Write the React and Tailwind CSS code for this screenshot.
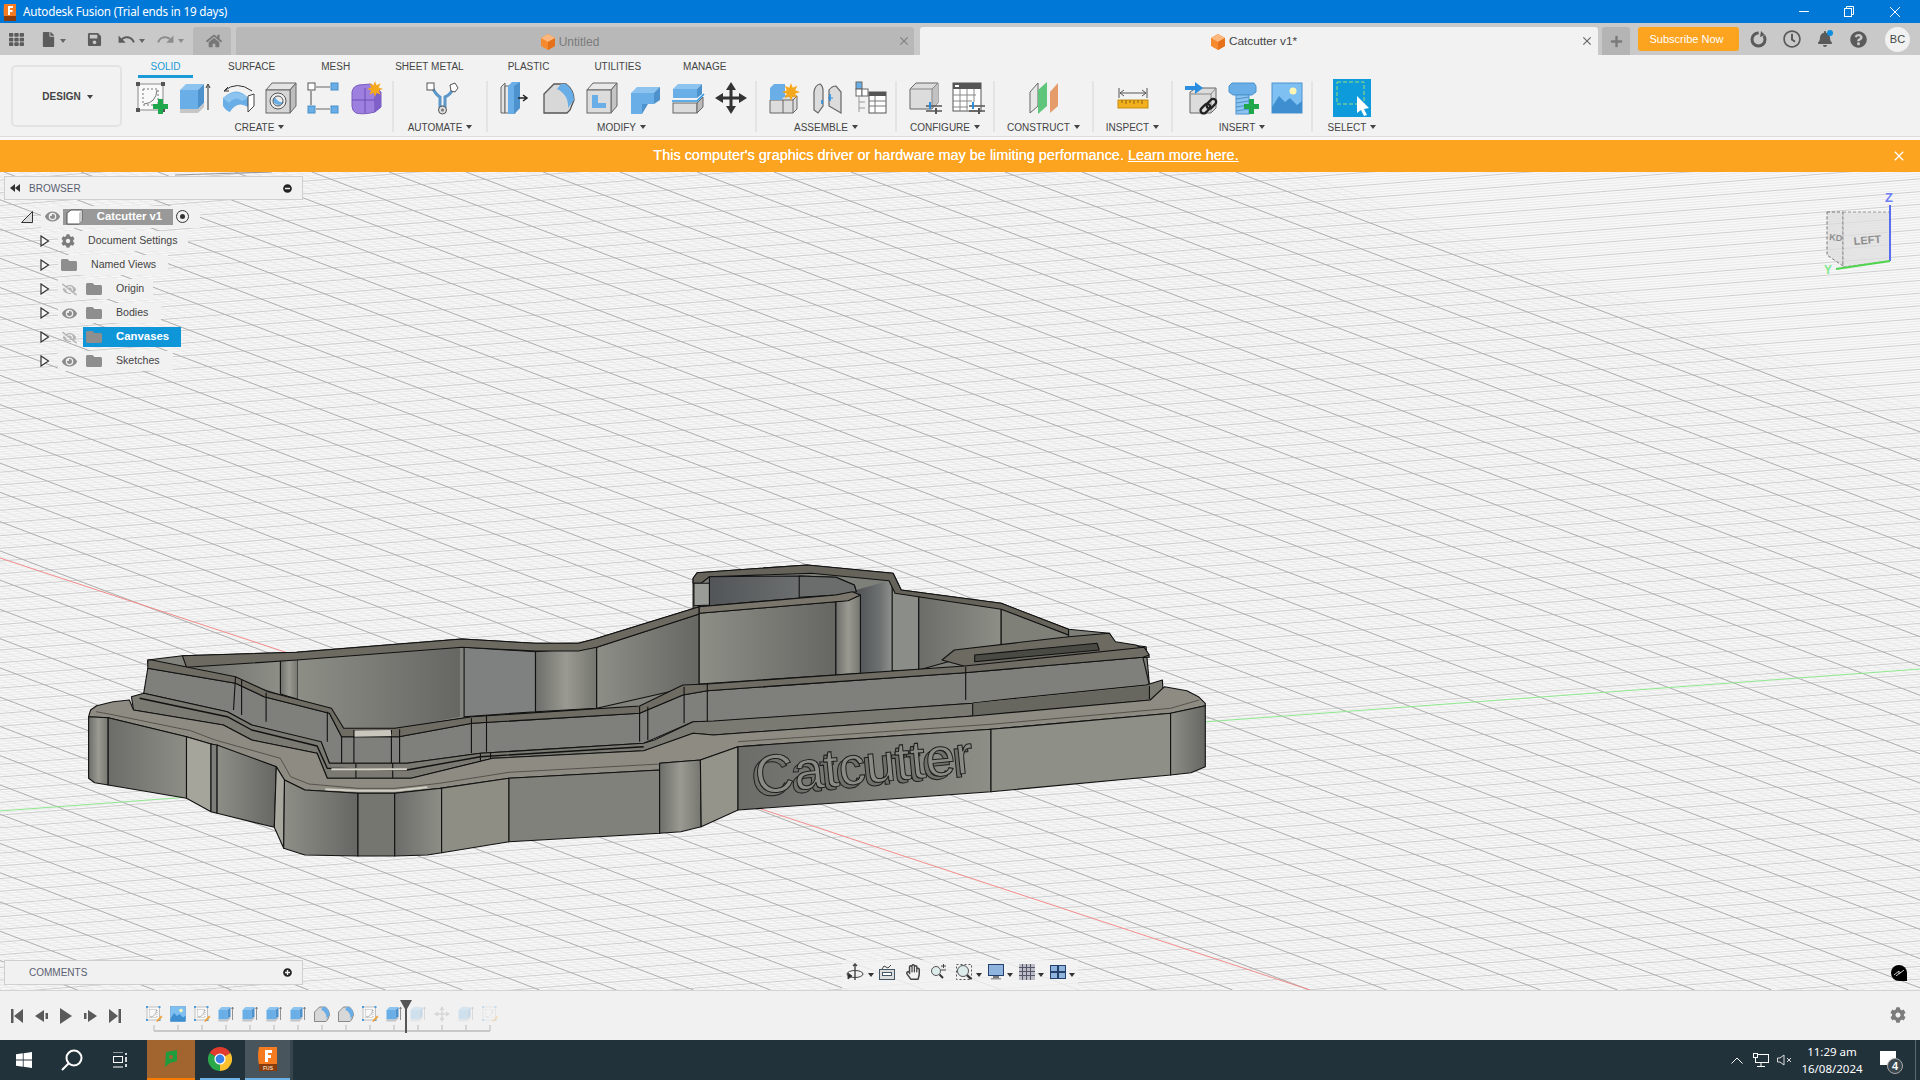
import { useMemo } from 'react'
import { FaCog, FaEye, FaEyeSlash, FaFolder, FaFile, FaSave, FaHome, FaTh, FaBell, FaQuestionCircle, FaRegHandPaper, FaPlus, FaMinusCircle, FaPlusCircle, FaRegClock } from 'react-icons/fa'
import { MdUndo, MdRedo, MdClose } from 'react-icons/md'

// points were read off the zoomed crops: left crop starts at x=60, right crop at x=640
const a = (pts) => pts.map(([x, y]) => `${(60 + x / 2.45).toFixed(1)},${(540 + y / 3).toFixed(1)}`).join(' ')
const b = (pts) => pts.map(([x, y]) => `${(640 + x / 2.45).toFixed(1)},${(540 + y / 3).toFixed(1)}`).join(' ')

function Caret({ color = 'border-t-[#444]' }) {
  return <span className={`inline-block w-0 h-0 border-x-[3px] border-x-transparent border-t-[4px] ${color}`} />
}

function Ico({ size = 32, children }) {
  return <svg width={size} height={size} viewBox="0 0 32 32" className="shrink-0 overflow-visible">{children}</svg>
}

function SketchIcon({ size, pencil }) {
  return (
    <Ico size={size}>
      <rect x="2" y="2" width="25" height="26" fill="#fff" fillOpacity="0.5" stroke="#8a8a8a" />
      <rect x="7" y="7" width="15" height="16" fill="none" stroke="#777" strokeDasharray="2 2" />
      <path d="M8 22 Q20 21 21 8" fill="none" stroke="#777" />
      {[[0, 0], [25, 0], [0, 26], [25, 26]].map(([x, y]) => <rect key={x + '-' + y} x={x} y={y} width="4" height="4" fill={pencil ? '#4d9fe0' : '#555'} />)}
      {pencil
        ? <path d="M20 30 L30 19 L33 22 L23 32 Z" fill="#f2a33a" />
        : <path d="M21 20 H26 V25 H31 V30 H26 V35 H21 V30 H16 V25 H21 Z" fill="#1ea84b" transform="translate(1 -3)" />}
    </Ico>
  )
}

function ExtrudeIcon({ size }) {
  return (
    <Ico size={size}>
      <polygon points="1,8 7,2 25,2 19,8" fill="#8cc4ef" />
      <rect x="1" y="8" width="18" height="19" fill="#69aee6" />
      <polygon points="19,8 25,2 25,21 19,27" fill="#4d92cd" />
      <polygon points="1,27 19,27 25,21 25,25 19,31 1,31" fill="#c6c6c6" />
      <path d="M29 28 V4 M27 6 L29 2 L31 6" fill="none" stroke="#333" />
    </Ico>
  )
}

function SweepIcon() {
  return (
    <Ico>
      <path d="M1 16 Q15 3 26 16 L26 25 Q15 18 8 30 Q4 29 1 24 Z" fill="#69aee6" />
      <path d="M1 16 Q15 5 26 16 L20 19 Q14 13 7 21 Z" fill="#8cc4ef" />
      <polygon points="26,14 32,12 32,24 26,30" fill="#fff" stroke="#444" />
      <path d="M2 9 Q15 -2 30 9" fill="none" stroke="#333" />
      <path d="M2 9 L6 5 M2 9 L7 9" stroke="#333" />
    </Ico>
  )
}

function HoleIcon() {
  return (
    <Ico>
      <polygon points="1,8 7,1 31,1 25,8" fill="#e4e4e4" stroke="#666" />
      <polygon points="25,8 31,1 31,24 25,31" fill="#bdbdbd" stroke="#666" />
      <rect x="1" y="8" width="24" height="23" fill="#d6d6d6" stroke="#666" />
      <circle cx="13" cy="19" r="8" fill="#eee" stroke="#555" />
      <path d="M8 18 A6 6 0 0 0 19 20 A8 8 0 0 1 10 15 Z" fill="#69aee6" />
      <circle cx="13" cy="19" r="5" fill="none" stroke="#555" />
    </Ico>
  )
}

function BoxSketchIcon() {
  return (
    <Ico>
      <path d="M8 5 H22 M3 9 V23 M8 27 H22" stroke="#666" strokeWidth="1.2" />
      <rect x="0" y="1" width="7" height="7" fill="#fff" stroke="#555" />
      <rect x="23" y="1" width="7" height="7" fill="#69aee6" stroke="#4a8fc8" />
      <rect x="0" y="24" width="7" height="7" fill="#69aee6" stroke="#4a8fc8" />
      <rect x="23" y="24" width="7" height="7" fill="#69aee6" stroke="#4a8fc8" />
    </Ico>
  )
}

function Star({ x, y, r = 7 }) {
  const pts = []
  for (let i = 0; i < 16; i++) {
    const rad = i % 2 ? r * 0.5 : r
    const t = (i * Math.PI) / 8
    pts.push(`${x + rad * Math.cos(t)},${y + rad * Math.sin(t)}`)
  }
  return <polygon points={pts.join(' ')} fill="#f6a81c" />
}

function FormIcon() {
  return (
    <Ico>
      <path d="M1 10 Q2 4 8 3 L20 2 L30 10 L30 25 L24 30 Q12 33 5 31 Q1 29 1 24 Z" fill="#9d7fe0" stroke="#7a5cc0" />
      <path d="M1 18 H24 M14 6 V31 M24 12 V30" stroke="#6d4fb5" fill="none" />
      <polygon points="24,12 30,10 30,25 24,30" fill="#7f5fc8" />
      <Star x={24} y={7} r={8} />
    </Ico>
  )
}

function AutomateIcon() {
  return (
    <Ico>
      <path d="M6 5 Q10 13 14 15 L14 25 L19 25 L19 15 Q24 13 27 7" fill="none" stroke="#5c97c9" strokeWidth="3" />
      <rect x="1" y="1" width="7" height="7" fill="#fff" stroke="#555" />
      <polygon points="24,3 29,1 32,6 29,10 25,9" fill="#fff" stroke="#555" />
      <circle cx="16.5" cy="28" r="4" fill="#ddd" stroke="#555" />
      <circle cx="16.5" cy="28" r="1.5" fill="#777" />
    </Ico>
  )
}

function PressPullIcon() {
  return (
    <Ico>
      <polygon points="1,5 5,1 5,31 1,31" fill="#e2e2e2" stroke="#666" />
      <rect x="5" y="4" width="10" height="27" fill="#e8e8e8" stroke="#666" />
      <polygon points="8,4 12,0 20,0 20,26 14,32 8,32" fill="#69aee6" />
      <polygon points="14,4 20,0 20,26 14,32" fill="#4d92cd" />
      <path d="M18 16 H26 M23 13 L27 16 L23 19" stroke="#222" strokeWidth="1.5" fill="none" />
    </Ico>
  )
}

function FilletIcon({ size }) {
  return (
    <Ico size={size}>
      <path d="M1 12 L11 2 H23 Q31 8 31 18 L27 28 L24 31 H1 Z" fill="#d8d8d8" stroke="#555" strokeWidth="1.3" />
      <path d="M18 2 H23 Q31 8 31 18 L25 26 Q26 13 14 7 Z" fill="#69aee6" />
    </Ico>
  )
}

function ChamferBoxIcon() {
  return (
    <Ico>
      <polygon points="1,8 7,1 31,1 25,8" fill="#e8e8e8" stroke="#666" />
      <polygon points="25,8 31,1 31,24 25,31" fill="#c4c4c4" stroke="#666" />
      <rect x="1" y="8" width="24" height="23" fill="#dcdcdc" stroke="#666" />
      <path d="M6 13 H12 V21 H20 V26 H6 Z" fill="#69aee6" />
    </Ico>
  )
}

function CombineIcon() {
  return (
    <Ico>
      <polygon points="2,11 8,5 31,5 31,10 25,11" fill="#8cc4ef" />
      <path d="M2 11 H25 V22 L13 22 L13 32 H2 Z" fill="#69aee6" />
      <polygon points="25,11 31,5 31,18 25,22" fill="#4d92cd" />
      <polygon points="13,32 13,22 19,22 13,32" fill="#4d92cd" />
    </Ico>
  )
}

function SplitIcon() {
  return (
    <Ico>
      <polygon points="1,7 6,2 30,2 25,7" fill="#8cc4ef" />
      <rect x="1" y="7" width="24" height="9" fill="#69aee6" />
      <polygon points="25,7 30,2 30,12 25,16" fill="#4d92cd" />
      <path d="M0 19 H25 L32 12" stroke="#2a96e6" strokeWidth="1.6" fill="none" />
      <rect x="1" y="21" width="24" height="10" fill="#dcdcdc" stroke="#666" />
      <polygon points="25,21 31,15 31,25 25,31" fill="#bbb" stroke="#666" />
    </Ico>
  )
}

function MoveIcon({ size, color = '#333' }) {
  return (
    <Ico size={size}>
      <path d="M16 3 V29 M3 16 H29" stroke={color} strokeWidth="3" />
      <path d="M16 0 L21 8 H11 Z M16 32 L21 24 H11 Z M0 16 L8 11 V21 Z M32 16 L24 11 V21 Z" fill={color} />
    </Ico>
  )
}

function ComponentIcon() {
  return (
    <Ico>
      <polygon points="1,18 5,14 28,14 28,27 24,31 1,31" fill="#dcdcdc" stroke="#666" />
      <path d="M14 18 V31 M1 18 H24 V31 M24 18 L28 14" stroke="#666" fill="none" />
      <polygon points="1,6 5,2 16,2 16,14 12,18 1,18" fill="#69aee6" />
      <Star x={22} y={10} r={9} />
    </Ico>
  )
}

function JointIcon() {
  return (
    <Ico>
      <path d="M2 28 V10 Q3 3 8 2 Q11 4 11 9 V24 L6 31 Z" fill="#dcdcdc" stroke="#666" strokeWidth="1.2" />
      <path d="M17 8 Q20 4 24 4 L29 10 V31 L17 24 Z" fill="#dcdcdc" stroke="#666" strokeWidth="1.2" />
      <path d="M10 18 V22 M18 12 V19" stroke="#2a8fe0" strokeWidth="1.6" />
      <path d="M16 16 H21" stroke="#2a8fe0" />
    </Ico>
  )
}

function BomIcon() {
  return (
    <Ico>
      <rect x="1" y="0" width="6" height="7" fill="#69aee6" stroke="#666" />
      <rect x="1" y="7" width="6" height="7" fill="#fff" stroke="#666" />
      <rect x="7" y="7" width="6" height="7" fill="#fff" stroke="#666" />
      <path d="M4 14 V30 M4 20 H10 M4 26 H10" stroke="#999" />
      <rect x="14" y="10" width="17" height="21" fill="#fff" stroke="#555" />
      <rect x="14" y="10" width="17" height="4" fill="#555" />
      <path d="M14 19 H31 M14 24 H31 M20 14 V31" stroke="#777" />
    </Ico>
  )
}

function Sliders() {
  return (
    <g>
      <path d="M17 24 H33 M17 29 H33" stroke="#555" strokeWidth="1.5" />
      <rect x="20" y="20" width="2" height="7" fill="#2a8fe0" />
      <rect x="26" y="26" width="2" height="6" fill="#555" />
    </g>
  )
}

function ConfigBoxIcon() {
  return (
    <Ico>
      <polygon points="1,7 7,1 29,1 29,21 23,27 1,27" fill="#dcdcdc" stroke="#666" />
      <polygon points="23,7 29,1 29,21 23,27" fill="#c2c2c2" />
      <path d="M1 7 H23 V27 M23 7 L29 1" stroke="#888" fill="none" />
      <Sliders />
    </Ico>
  )
}

function ConfigTableIcon() {
  return (
    <Ico>
      <rect x="1" y="1" width="28" height="28" fill="#fff" stroke="#555" />
      <rect x="1" y="1" width="28" height="6" fill="#555" />
      <rect x="3" y="3" width="4" height="2" fill="#fff" />
      <path d="M1 13 H24 M1 19 H20 M1 25 H16 M8 7 V29 M15 7 V29 M22 7 V20" stroke="#888" />
      <Sliders />
    </Ico>
  )
}

function PlaneIcon() {
  return (
    <Ico>
      <polygon points="1,10 9,1 9,24 1,31" fill="#e8e8e8" stroke="#666" />
      <polygon points="9,8 18,0 18,24 9,32" fill="#5fc57a" />
      <polygon points="21,10 29,1 29,24 21,31" fill="#e59b6a" />
    </Ico>
  )
}

function MeasureIcon() {
  return (
    <Ico>
      <path d="M1 6 V16 M29 6 V16 M2 11 H28 M2 11 L6 8 M2 11 L6 14 M28 11 L24 8 M28 11 L24 14" stroke="#555" fill="none" />
      <rect x="0" y="18" width="30" height="8" fill="#f2b01e" stroke="#c98d10" />
      <path d="M4 18 V21 M8 18 V22 M12 18 V21 M16 18 V22 M20 18 V21 M24 18 V22" stroke="#8a6208" />
    </Ico>
  )
}

function InsertLinkIcon() {
  return (
    <Ico>
      <polygon points="5,10 11,6 31,6 31,26 26,31 5,31" fill="#dcdcdc" stroke="#666" />
      <path d="M5 12 H26 V31 M26 12 L31 6" stroke="#888" fill="none" />
      <path d="M0 4 H10 V0 L18 6 L10 12 V8 H0 Z" fill="#2a8fe0" />
      <g fill="none" stroke="#222" strokeWidth="2.4">
        <rect x="15" y="24" width="11" height="6" rx="3" transform="rotate(-45 20 27)" />
        <rect x="21" y="19" width="11" height="6" rx="3" transform="rotate(-45 26 22)" />
      </g>
    </Ico>
  )
}

function BoltIcon() {
  return (
    <Ico>
      <polygon points="1,4 4,1 26,1 28,4 28,10 24,13 5,13 1,10" fill="#69aee6" stroke="#4d92cd" />
      <rect x="8" y="13" width="13" height="19" fill="#8cc4ef" stroke="#4d92cd" />
      <path d="M8 17 L21 15 M8 21 L21 19 M8 25 L21 23 M8 29 L21 27" stroke="#4d92cd" />
      <path d="M21 21 H26 V26 H31 V31 H26 V36 H21 V31 H16 V26 H21 Z" fill="#1ea84b" transform="translate(0 -4)" />
    </Ico>
  )
}

function CanvasIcon({ size }) {
  return (
    <Ico size={size}>
      <rect x="1" y="1" width="30" height="30" fill="#7fc0f2" stroke="#4d92cd" />
      <circle cx="22" cy="9" r="3.5" fill="#fdf6b5" />
      <path d="M1 25 L8 14 L14 20 L19 16 L26 23 L31 19 V31 H1 Z" fill="#3f8fd0" />
    </Ico>
  )
}

function SelectIcon() {
  return (
    <svg width="38" height="38" viewBox="0 0 38 38" className="shrink-0">
      <rect width="38" height="38" fill="#0d9bdc" />
      <rect x="4" y="3" width="27" height="22" fill="none" stroke="#9ce07a" strokeDasharray="4 2" />
      <path d="M24 17 L24 34 L28 31 L31 37 L34 36 L31 30 L36 29 Z" fill="#fff" />
    </svg>
  )
}

const GROUPS = [
  { label: 'CREATE', w: 'w-[267px]', pad: 'pl-0', icons: [<SketchIcon key="1" />, <ExtrudeIcon key="2" />, <SweepIcon key="3" />, <HoleIcon key="4" />, <BoxSketchIcon key="5" />, <FormIcon key="6" />] },
  { label: 'AUTOMATE', w: 'w-[94px]', pad: 'pl-[3px]', icons: [<AutomateIcon key="1" />] },
  { label: 'MODIFY', w: 'w-[269px]', pad: 'pl-[3px]', icons: [<PressPullIcon key="1" />, <FilletIcon key="2" />, <ChamferBoxIcon key="3" />, <CombineIcon key="4" />, <SplitIcon key="5" />, <MoveIcon key="6" />] },
  { label: 'ASSEMBLE', w: 'w-[140px]', pad: 'pl-[3px]', icons: [<ComponentIcon key="1" />, <JointIcon key="2" />, <BomIcon key="3" />] },
  { label: 'CONFIGURE', w: 'w-[98px]', pad: 'pl-[3px]', icons: [<ConfigBoxIcon key="1" />, <ConfigTableIcon key="2" />] },
  { label: 'CONSTRUCT', w: 'w-[99px]', pad: 'pl-[3px]', icons: [<PlaneIcon key="1" />] },
  { label: 'INSPECT', w: 'w-[79px]', pad: 'pl-[3px]', icons: [<MeasureIcon key="1" />] },
  { label: 'INSERT', w: 'w-[140px]', pad: 'pl-[3px]', icons: [<InsertLinkIcon key="1" />, <BoltIcon key="2" />, <CanvasIcon key="3" />] },
]

function TitleBar() {
  return (
    <div className="h-[23px] bg-[#0078d7] flex items-center text-white">
      <svg width="16" height="18" viewBox="0 0 16 18" className="ml-[2px]">
        <path d="M2 1 H14 V14 H2 Q1 8 2 1 Z" fill="#f47b20" />
        <rect x="2" y="13" width="12" height="5" fill="#8a3b0c" />
        <path d="M6 3 H11 V5 H8 V7 H10.5 V9 H8 V12 H6 Z" fill="#fff" />
      </svg>
      <span className="ml-[5px] text-[11.7px] font-['Noto_Sans',sans-serif] tracking-[-0.2px]">Autodesk Fusion (Trial ends in 19 days)</span>
      <div className="ml-auto flex items-center">
        <span className="w-[10px] h-px bg-white mr-[35px]" />
        <svg width="10" height="11" viewBox="0 0 10 11" className="mr-[35px]" fill="none" stroke="#fff"><rect x="0.5" y="2.5" width="7" height="8" /><path d="M2.5 2.5 V0.5 H9.5 V8.5 H7.5" /></svg>
        <svg width="12" height="12" viewBox="0 0 12 12" className="mr-[19px]" stroke="#fff"><path d="M1 1 L11 11 M11 1 L1 11" /></svg>
      </div>
    </div>
  )
}

function TabBar() {
  return (
    <div className="h-[32px] bg-[#c9c9c9] flex items-end">
      <div className="w-[193px] h-full flex items-center text-[#5c5c5c]">
        <FaTh size={15} className="ml-[9px]" />
        <FaFile size={15} className="ml-[17px]" />
        <span className="ml-[4px] mb-[2px]"><Caret color="border-t-[#666]" /></span>
        <FaSave size={15} className="ml-[21px]" />
        <MdUndo size={19} className="ml-[15px]" />
        <span className="ml-[3px] mb-[2px]"><Caret color="border-t-[#666]" /></span>
        <MdRedo size={19} className="ml-[11px] text-[#8c8c8c]" />
        <span className="ml-[3px] mb-[2px]"><Caret color="border-t-[#8c8c8c]" /></span>
      </div>
      <div className="w-[38px] h-[28px] pl-[3px] bg-[#b8b8b8] rounded-t-[3px] flex items-center justify-center text-[#777]">
        <FaHome size={16} />
      </div>
      <div className="relative ml-[5px] w-[678px] h-[28px] pr-[10px] pt-[1px] bg-[#b8b8b8] rounded-t-[3px] flex items-center justify-center gap-[4px] text-[12px] text-[#7b7b7b]">
        <DocCube />
        <span>Untitled</span>
        <MdClose size={14} className="absolute right-[3px] top-[7px] text-[#808080]" />
      </div>
      <div className="relative ml-[6px] w-[678px] h-[28px] pr-[10px] pt-[1px] bg-[#f2f2f2] rounded-t-[3px] flex items-center justify-center gap-[4px] text-[11.8px] text-[#444]">
        <DocCube />
        <span>Catcutter v1*</span>
        <MdClose size={14} className="absolute right-[4px] top-[7px] text-[#666]" />
      </div>
      <div className="ml-[4px] w-[28px] h-[28px] bg-[#b4b4b4] rounded-t-[3px] flex items-center justify-center text-[#7a7a7a]">
        <FaPlus size={13} />
      </div>
      <div className="ml-[8px] mb-[4px] w-[101px] h-[24px] pr-[4px] bg-[#fca31f] rounded-[3px] flex items-center justify-center text-[11px] text-white">Subscribe Now</div>
      <div className="h-full flex items-center text-[#5a5a5a]">
        <svg width="17" height="17" viewBox="0 0 17 17" className="ml-[11px]"><circle cx="8.5" cy="8.5" r="6.5" fill="none" stroke="#5a5a5a" strokeWidth="3" strokeDasharray="30 6" /><path d="M11 0 L15 4 L10 6 Z" fill="#5a5a5a" /></svg>
        <FaRegClock size={18} className="ml-[16px]" />
        <span className="relative ml-[16px]">
          <FaBell size={16} />
          <span className="absolute -top-[1px] right-0 w-[6px] h-[6px] rounded-full bg-[#0d8ee0]" />
        </span>
        <FaQuestionCircle size={17} className="ml-[17px]" />
        <div className="ml-[18px] w-[25px] h-[25px] rounded-full bg-[#f1f1f1] flex items-center justify-center text-[11px] text-[#444]">BC</div>
      </div>
    </div>
  )
}

function DocCube() {
  return (
    <svg width="14" height="16" viewBox="0 0 14 16">
      <polygon points="7,0 14,4 14,12 7,16 0,12 0,4" fill="#f58a2e" />
      <polygon points="7,0 14,4 7,8 0,4" fill="#fbb77c" />
      <polygon points="7,8 14,4 14,12 7,16" fill="#e5711a" />
    </svg>
  )
}

function Ribbon() {
  return (
    <div className="h-[82px] bg-[#f2f2f2] border-b border-b-[#dcdcdc] flex">
      <div className="w-[127px] shrink-0 pl-[11px] pt-[10px]">
        <div className="w-[111px] h-[62px] pt-[1px] pl-[2px] border-2 border-[#e3e3e3] rounded-[5px] flex items-center justify-center gap-[6px] text-[10px] font-bold text-[#444]">
          DESIGN <Caret />
        </div>
      </div>
      <div className="flex flex-col">
        <div className="h-[23px] flex pl-[11px] text-[10px] leading-[23px] text-[#444]">
          <div className="w-[55px] h-[23px] text-center text-[#1a9ad6] border-b-[3px] border-b-[#1a9ad6]">SOLID</div>
          <div className="ml-[35px]">SURFACE</div>
          <div className="ml-[46px]">MESH</div>
          <div className="ml-[45px]">SHEET METAL</div>
          <div className="ml-[44px]">PLASTIC</div>
          <div className="ml-[45px]">UTILITIES</div>
          <div className="ml-[42px]">MANAGE</div>
        </div>
        <div className="flex pt-[3px]">
          {GROUPS.map((g) => (
            <div key={g.label} className={`${g.w} h-[51px] pt-[1px] border-r-2 border-r-[#e4e4e4] flex flex-col items-center`}>
              <div className={`h-[32px] ${g.pad} flex items-center gap-[11px]`}>{g.icons}</div>
              <div className="mt-[7px] h-[12px] flex items-center gap-[4px] text-[10px] text-[#444]">{g.label} <Caret /></div>
            </div>
          ))}
          <div className="w-[78px] h-[51px] pt-[1px] flex flex-col items-center">
            <div className="h-[32px] flex items-center"><SelectIcon /></div>
            <div className="mt-[7px] h-[12px] flex items-center gap-[4px] text-[10px] text-[#444]">SELECT <Caret /></div>
          </div>
        </div>
      </div>
    </div>
  )
}

function Banner() {
  return (
    <div className="relative h-[32px] pr-[28px] bg-[#fca31f] flex items-center justify-center text-white text-[14.45px] font-medium">
      <span className="[text-shadow:0_0_0.4px_#fff]">This computer's graphics driver or hardware may be limiting performance. <span className="underline">Learn more here.</span></span>
      <MdClose size={16} className="absolute right-[13px] top-[8px]" />
    </div>
  )
}

function GridLines() {
  const { minor, majorA, majorB } = useMemo(() => {
    let minor = ''
    let majorA = ''
    let majorB = ''
    // family along the red axis
    for (let k = -60; k < 300; k++) {
      const x0 = 1373 + (k - 200) * 15.4
      const x1 = x0 + (172 - 780) / 0.38
      const x2 = x0 + (990 - 780) / 0.38
      const seg = `M${x1.toFixed(1)} 172L${x2.toFixed(1)} 990`
      if ((k + 1000) % 5 === 0) majorA += seg
      else minor += seg
    }
    // family along the green axis
    for (let k = -400; k < 100; k++) {
      const y0 = 800 + k * 2.54
      const seg = `M0 ${(y0 + 0.08 * 1300).toFixed(1)}L1920 ${(y0 - 0.08 * 620).toFixed(1)}`
      if ((k + 1000) % 5 === 0) majorB += seg
      else minor += seg
    }
    return { minor, majorA, majorB }
  }, [])
  return (
    <g fill="none">
      <path d={minor} stroke="#e4e4e4" strokeWidth="0.7" />
      <path d={majorB} stroke="#cdcdcd" strokeWidth="1" />
      <path d={majorA} stroke="#adadad" strokeWidth="1" />
      <path d="M0 558 L1310 990" stroke="#f28c8c" strokeWidth="1" />
      <path d="M0 811 L1920 669" stroke="#8fe88f" strokeWidth="1" />
      <path d="M175 175 L272 172" stroke="#999" strokeWidth="1.2" />
    </g>
  )
}

function Model() {
  const line = { stroke: '#111', strokeWidth: 1.1, strokeLinejoin: 'round' }
  return (
    <g>
      <defs>
        <linearGradient id="gA"><stop offset="0" stopColor="#6c6d69" /><stop offset="1" stopColor="#8d8e86" /></linearGradient>
        <linearGradient id="gB"><stop offset="0" stopColor="#8d8e86" /><stop offset="1" stopColor="#666763" /></linearGradient>
        <linearGradient id="gC"><stop offset="0" stopColor="#6d6e6a" /><stop offset="0.5" stopColor="#9a9a92" /><stop offset="1" stopColor="#75766f" /></linearGradient>
        <linearGradient id="gD"><stop offset="0" stopColor="#4f5254" /><stop offset="0.7" stopColor="#6f7272" /><stop offset="1" stopColor="#8c8e8c" /></linearGradient>
      </defs>

      {/* tower at the back */}
      <polygon {...line} fill="#7d7f79" points={b([[130, 195], [130, 115], [140, 98], [410, 75], [620, 100], [640, 150], [885, 190], [1050, 268], [1150, 280], [1165, 310], [1240, 320], [1248, 435], [600, 500], [130, 430]])} />
      <polygon fill="url(#gD)" points={b([[530, 150], [615, 120], [615, 392], [530, 402]])} />
      <polygon {...line} fill="#8b8d89" points={b([[618, 118], [640, 155], [683, 165], [683, 390], [618, 392]])} />
      <polygon {...line} fill="url(#gA)" points={b([[683, 165], [885, 205], [885, 320], [683, 390]])} />
      <polygon {...line} fill="#7f8179" points={b([[885, 205], [1050, 285], [1050, 300], [885, 320]])} />
      <polygon {...line} fill="#66635b" points={b([[130, 115], [140, 98], [410, 75], [620, 100], [640, 150], [885, 190], [1050, 268], [1050, 285], [885, 208], [625, 160], [610, 122], [420, 100], [170, 110], [150, 130], [130, 130]])} />
      <polygon {...line} fill="url(#gD)" points={b([[170, 110], [390, 108], [480, 112], [525, 135], [530, 155], [480, 165], [145, 200], [170, 195]])} />
      <polygon {...line} fill="#9a9c98" points={b([[132, 130], [170, 130], [170, 195], [132, 197]])} />
      <polygon {...line} fill="#6b6d6c" points={b([[390, 108], [480, 112], [525, 135], [530, 155], [480, 165], [390, 172]])} />

      {/* far ledge */}
      <polygon {...line} fill="#6d6a61" points={b([[740, 360], [770, 330], [1050, 290], [1150, 280], [1165, 305], [1215, 315], [1240, 330], [1248, 352], [800, 380]])} />
      <polygon {...line} fill="#4a4a44" points={b([[820, 345], [1120, 310], [1125, 330], [820, 365]])} />

      {/* inner walls */}
      <polygon {...line} fill="#82837c" points={`${a([[215, 360], [300, 347], [580, 337], [985, 297], [1165, 310], [1270, 310], [1310, 297]])} ${b([[145, 200], [145, 440], [0, 520]])} ${a([[1420, 500], [1010, 530], [830, 565], [690, 570], [660, 510], [500, 450], [300, 380], [215, 370]])}`} />
      <polygon fill="url(#gA)" points={a([[310, 375], [540, 358], [540, 462], [420, 410]])} />
      <polygon {...line} fill="url(#gC)" points={a([[540, 358], [582, 355], [582, 478], [540, 462]])} />
      <polygon fill="url(#gB)" points={a([[582, 358], [980, 322], [980, 530], [830, 565], [700, 570], [670, 505], [582, 478]])} />
      <polygon {...line} fill="#7e817f" points={a([[990, 322], [1165, 335], [1165, 515], [990, 530]])} />
      <polygon {...line} fill="url(#gC)" points={a([[1165, 335], [1315, 322], [1315, 505], [1165, 515]])} />
      <polygon {...line} fill="url(#gB)" points={`${a([[1315, 322]])} ${b([[145, 222], [145, 435]])} ${a([[1315, 505]])}`} />
      <polygon {...line} fill="#6d6a61" points={`${a([[300, 347], [580, 337], [985, 297], [1165, 310], [1270, 310], [1310, 297]])} ${b([[145, 200], [145, 222]])} ${a([[1315, 322], [1270, 333], [1165, 333], [985, 322], [580, 360], [310, 382]])}`} />

      {/* front of the tower */}
      <polygon {...line} fill="url(#gB)" points={b([[145, 220], [480, 185], [480, 405], [145, 432]])} />
      <polygon {...line} fill="url(#gC)" points={b([[480, 185], [510, 180], [540, 165], [540, 400], [480, 405]])} />
      <polygon {...line} fill="#7a766c" points={b([[145, 200], [480, 165], [520, 155], [540, 165], [510, 182], [480, 185], [145, 220]])} />

      {/* lower wall */}
      <polygon {...line} fill="#7f807b" points={`${a([[215, 385], [430, 430], [500, 470], [660, 520], [690, 590], [830, 590], [1010, 550], [1420, 520]])} ${b([[105, 465], [165, 452], [795, 398], [1232, 352], [1248, 435], [815, 490], [180, 545], [130, 545]])} ${a([[1430, 610], [1030, 640], [850, 670], [660, 670], [640, 610], [470, 555], [410, 515], [205, 460]])}`} />
      <polygon {...line} fill="#6e6c63" points={`${a([[215, 360], [225, 360], [430, 410], [510, 455], [665, 505], [695, 565], [820, 565], [1010, 530], [1420, 498]])} ${b([[105, 435], [165, 432], [795, 378], [1235, 322], [1248, 345], [1232, 352], [795, 398], [165, 452], [105, 465]])} ${a([[1420, 520], [1010, 550], [830, 590], [690, 590], [660, 520], [500, 470], [430, 430], [215, 385]])}`} />
      <path {...line} fill="none" d={`M${a([[430, 410]])} L${a([[425, 510]])} M${a([[445, 420]])} L${a([[445, 525]])} M${a([[505, 458]])} L${a([[505, 545]])} M${a([[655, 515]])} L${a([[655, 605]])} M${a([[690, 590]])} L${a([[690, 670]])} M${a([[720, 570]])} L${a([[720, 670]])} M${a([[812, 570]])} L${a([[812, 670]])} M${a([[832, 568]])} L${a([[832, 670]])} M${a([[1008, 535]])} L${a([[1008, 640]])} M${a([[1045, 528]])} L${a([[1045, 635]])} M${a([[1420, 500]])} L${a([[1420, 605]])} M${a([[1440, 500]])} L${a([[1440, 600]])} M${b([[108, 440]])} L${b([[108, 550]])} M${b([[165, 432]])} L${b([[165, 543]])} M${b([[798, 380]])} L${b([[798, 480]])}`} />
      <polygon fill="#c9c7bd" points={a([[722, 572], [810, 570], [812, 588], [722, 590]])} />

      {/* middle ledge */}
      <polygon {...line} fill="#7a7a72" points={`${a([[175, 470], [205, 460], [410, 515], [470, 555], [640, 605], [660, 670], [850, 670], [1030, 640], [1430, 610]])} ${b([[35, 600], [130, 545], [180, 543], [815, 490], [880, 480], [1240, 435], [1280, 420], [1282, 470], [1250, 480], [815, 528], [180, 585], [130, 580], [30, 625]])} ${a([[1430, 632], [1060, 655], [860, 715], [655, 715], [630, 640], [470, 600], [400, 555], [180, 510]])}`} />
      <path {...line} fill="none" strokeWidth="1.4" d={`M${a([[195, 475], [410, 530], [470, 570], [630, 618], [655, 685], [850, 690], [1030, 650], [1430, 620]]).replaceAll(' ', ' L')}`} />
      <polygon fill="#68675f" points={b([[815, 490], [1246, 437], [1248, 478], [815, 528]])} />
      <path {...line} fill="none" d={`M${b([[815, 490]])} L${b([[815, 528]])} M${b([[1248, 437]])} L${b([[1248, 478]])} M${a([[725, 670]])} L${a([[725, 718]])} M${a([[815, 670]])} L${a([[815, 718]])} M${a([[1030, 640]])} L${a([[1030, 672]])} M${a([[1055, 638]])} L${a([[1055, 660]])}`} />
      <path d={`M${a([[665, 688], [850, 688]]).replace(' ', ' L')}`} stroke="#d6d3c8" strokeWidth="2" />

      {/* base top, corners rounded with extra points */}
      <polygon {...line} fill="#8e8c82" points={`${a([[70, 530], [75, 510], [90, 497], [130, 485], [170, 480], [180, 510], [400, 555], [470, 600], [630, 640], [655, 715], [860, 715], [1060, 655], [1430, 632]])} ${b([[130, 580], [180, 585], [815, 528], [1250, 480], [1285, 440], [1340, 452], [1368, 470], [1385, 490], [1385, 497], [1300, 520], [860, 568], [240, 620], [148, 660], [48, 670]])} ${a([[1470, 690], [1100, 715], [930, 745], [820, 760], [730, 760], [600, 750], [550, 720], [530, 680], [370, 612], [310, 590], [118, 533]])}`} />
      <path fill="none" stroke="#55534c" strokeWidth="1" d={`M${a([[88, 515], [120, 522], [320, 572], [380, 600], [540, 655], [565, 710], [610, 732], [730, 745], [820, 745], [930, 730], [1100, 697], [1470, 672]]).replaceAll(' ', ' L')}`} />
      <path fill="none" stroke="#d2cfc4" strokeWidth="2" d={`M${a([[650, 748], [730, 752], [820, 752], [900, 742]]).replaceAll(' ', ' L')}`} />
      <path fill="none" stroke="#55534c" strokeWidth="1" d={`M${b([[240, 605], [860, 553], [1300, 505], [1370, 480]]).replaceAll(' ', ' L')}`} />

      {/* base front faces */}
      <polygon {...line} fill="url(#gC)" points={a([[70, 530], [118, 533], [118, 735], [85, 728], [70, 715]])} />
      <polygon {...line} fill="url(#gA)" points={a([[118, 533], [310, 590], [310, 775], [118, 735]])} />
      <polygon {...line} fill="#a5a59c" points={a([[310, 590], [370, 612], [370, 815], [310, 775]])} />
      <polygon {...line} fill="#7d7e79" points={a([[370, 612], [385, 615], [385, 820], [370, 815]])} />
      <polygon {...line} fill="url(#gB)" points={a([[385, 615], [530, 680], [525, 862], [385, 820]])} />
      <polygon {...line} fill="#a8a89f" points={a([[530, 680], [550, 720], [548, 925], [525, 862]])} />
      <polygon {...line} fill="url(#gB)" points={a([[550, 720], [600, 750], [730, 760], [730, 948], [600, 945], [548, 925]])} />
      <polygon {...line} fill="#75766f" points={a([[730, 760], [820, 760], [820, 948], [730, 948]])} />
      <polygon {...line} fill="url(#gA)" points={a([[820, 760], [935, 745], [935, 938], [900, 945], [820, 948]])} />
      <polygon {...line} fill="#8e8e85" points={a([[935, 745], [1100, 715], [1100, 905], [935, 938]])} />
      <polygon {...line} fill="#80817a" points={a([[1100, 715], [1470, 690], [1470, 880], [1100, 905]])} />
      <polygon {...line} fill="url(#gC)" points={b([[48, 670], [148, 660], [150, 860], [100, 875], [48, 880]])} />
      <polygon {...line} fill="#94948a" points={b([[148, 660], [240, 620], [240, 810], [150, 860]])} />
      <polygon {...line} fill="url(#gA)" points={b([[240, 620], [860, 568], [860, 755], [240, 810]])} />
      <polygon {...line} fill="#8e8f86" points={b([[860, 568], [1300, 520], [1300, 705], [860, 755]])} />
      <polygon {...line} fill="url(#gB)" points={b([[1300, 520], [1385, 497], [1385, 680], [1350, 698], [1300, 705]])} />

      {/* embossed name on the front face */}
      <g transform="rotate(-5.6 756 797)" fontFamily="'Liberation Sans', Arial, sans-serif" fontSize="54">
        <text x="753" y="797" fill="#6f706a" stroke="#1c1c1c" strokeWidth="1">Catcutter</text>
        <text x="757" y="794" fill="#8a8b84" stroke="#1c1c1c" strokeWidth="1">Catcutter</text>
      </g>
    </g>
  )
}

function ViewCube() {
  return (
    <svg width="120" height="100" viewBox="0 0 120 100" className="absolute left-[1800px] top-[8px]">
      <polygon points="27,32 43,32 43,86 27,75" fill="#dcdcdc" fillOpacity="0.7" stroke="#777" strokeDasharray="3 2" />
      <polygon points="43,32 90,32 90,81 43,87" fill="#dedede" fillOpacity="0.7" stroke="#999" strokeDasharray="3 2" />
      <g fontFamily="'Liberation Sans', sans-serif" fontWeight="700" fill="#8f8f8f">
        <text x="54" y="65" fontSize="11" transform="rotate(-5 54 65)">LEFT</text>
        <text x="29" y="60" fontSize="9" transform="rotate(6 29 60)">KD</text>
      </g>
      <path d="M90 25 V81" stroke="#5a6cf0" strokeWidth="2" />
      <path d="M36 89 L90 81" stroke="#4fd44f" strokeWidth="2" />
      <text x="85" y="22" fontSize="13" fontWeight="700" fontFamily="'Liberation Sans', sans-serif" fill="#6f7ff5">Z</text>
      <text x="24" y="94" fontSize="12" fontWeight="700" fontFamily="'Liberation Sans', sans-serif" fill="#7fe88f">Y</text>
    </svg>
  )
}

const TREE = [
  { label: 'Document Settings', eye: null, icon: 'cog', w: 'w-[130px]', textMl: 'ml-[13px]' },
  { label: 'Named Views', eye: null, icon: 'folder', w: 'w-[110px]', textMl: 'ml-[14px]' },
  { label: 'Origin', eye: 'off', icon: 'folder', w: 'w-[95px]', textMl: 'ml-[14px]' },
  { label: 'Bodies', eye: 'on', icon: 'folder', w: 'w-[103px]', textMl: 'ml-[14px]' },
  { label: 'Canvases', eye: 'off', icon: 'folder', w: 'w-[123px]', textMl: 'ml-[14px]', active: true },
  { label: 'Sketches', eye: 'on', icon: 'folder', w: 'w-[115px]', textMl: 'ml-[14px]' },
]

function Expander() {
  return <svg width="10" height="12" viewBox="0 0 10 12" className="shrink-0"><path d="M1 1 L8.5 6 L1 11 Z" fill="#f7f7f7" stroke="#333" strokeWidth="1.2" /></svg>
}

function TreeRow({ row }) {
  return (
    <div className="h-[24px] flex items-center pl-[36px]">
      <Expander />
      <div className={`${row.w} ml-[8px] h-[20px] flex items-center ${row.active ? 'bg-transparent' : 'bg-[#f1f1f1]'}`}>
        {row.eye && (
          <span className="w-[25px] pl-[4px] shrink-0">
            {row.eye === 'on' ? <FaEye size={15} className="text-[#8c8c8c]" /> : <FaEyeSlash size={15} className="text-[#b5b5b5]" />}
          </span>
        )}
        <div className={`h-[20px] flex items-center ${row.active ? 'w-[98px] bg-[#0f96d9] text-white font-bold' : 'text-[#444]'}`}>
          {row.icon === 'cog'
            ? <FaCog size={14} className="ml-[3px] text-[#7c7c7c]" />
            : <FaFolder size={16} className="ml-[3px] text-[#8e8e8e]" />}
          <span className={`${row.textMl} ${row.active ? 'text-[11.4px]' : 'text-[10.6px]'} whitespace-nowrap`}>{row.label}</span>
        </div>
      </div>
    </div>
  )
}

function Browser() {
  return (
    <div className="absolute left-[4px] top-[4px] w-[299px]">
      <div className="h-[24px] bg-[#f1f1f1] border border-[#cfcfcf] flex items-center pl-[5px] pr-[10px] text-[10px] text-[#5a6070]">
        <svg width="10" height="8" viewBox="0 0 10 8" fill="#333"><path d="M5 0 V8 L0 4 Z M10 0 V8 L5 4 Z" /></svg>
        <span className="ml-[9px]">BROWSER</span>
        <FaMinusCircle size={9} className="ml-auto text-[#222]" />
      </div>
      <div className="h-[25px] mt-[4px] flex items-center pl-[17px]">
        <svg width="12" height="12" viewBox="0 0 12 12"><path d="M0.5 11.5 L11.5 0.5 V11.5 Z" fill="#ddd" stroke="#333" /></svg>
        <div className="ml-[8px] w-[159px] h-[22px] bg-[#f1f1f1] flex items-center">
          <FaEye size={15} className="ml-[4px] text-[#8c8c8c]" />
          <div className="ml-[3px] w-[110px] h-[16px] bg-[#999] flex items-center">
            <svg width="17" height="16" viewBox="0 0 17 16" className="ml-[3px] shrink-0"><polygon points="1,4 5,1 16,1 16,12 13,15 1,15" fill="#fff" stroke="#555" /><polygon points="13,4 16,1 16,12 13,15" fill="#ccc" /></svg>
            <span className="flex-1 pl-[3px] text-center text-white font-bold text-[11.3px]">Catcutter v1</span>
          </div>
          <span className="ml-[3px] w-[13px] h-[13px] rounded-full border border-[#333] flex items-center justify-center"><span className="w-[5px] h-[5px] rounded-full bg-[#333]" /></span>
        </div>
      </div>
      {TREE.map((row) => <TreeRow key={row.label} row={row} />)}
    </div>
  )
}

function NavCaret() {
  return <span className="ml-[3px]"><Caret color="border-t-[#333]" /></span>
}

function NavBar() {
  return (
    <div className="absolute left-[842px] bottom-0 w-[236px] h-[30px] pb-[6px] bg-[#f2f2f2]/80 flex items-center pl-[3px]">
      <svg width="20" height="18" viewBox="0 0 20 18" fill="none" stroke="#444"><ellipse cx="10" cy="11" rx="8" ry="3.5" /><path d="M10 1 V17 M8 3 L10 1 L12 3" strokeWidth="1.4" /><path d="M3 10 L7 13 L3 16 Z" fill="#222" /></svg>
      <NavCaret />
      <svg width="16" height="16" viewBox="0 0 16 16" className="ml-[5px]" fill="none" stroke="#456"><rect x="0.5" y="5.5" width="15" height="10" fill="#ddd" /><rect x="3.5" y="8.5" width="9" height="3" fill="#fff" /><path d="M3 5 L5 2 L9 4 L12 1" stroke="#444" /></svg>
      <FaRegHandPaper size={16} className="ml-[10px] text-[#444]" />
      <svg width="17" height="16" viewBox="0 0 17 16" className="ml-[9px]" fill="none"><circle cx="6" cy="7" r="4.5" fill="#dcecec" stroke="#555" /><path d="M9.5 10.5 L13 14" stroke="#333" strokeWidth="2" /><path d="M11 2 H16 M13.5 0 V4 M11 6 H16" stroke="#444" /></svg>
      <svg width="17" height="17" viewBox="0 0 17 17" className="ml-[9px]" fill="none"><rect x="0.5" y="0.5" width="15" height="15" stroke="#555" strokeDasharray="2 2" /><circle cx="7" cy="7" r="5.5" fill="#dcecec" stroke="#555" /><path d="M11 11 L15 15" stroke="#333" strokeWidth="2.4" /></svg>
      <NavCaret />
      <svg width="16" height="16" viewBox="0 0 16 16" className="ml-[6px]"><rect x="0.5" y="0.5" width="15" height="11" fill="#8fb4de" stroke="#24406b" /><rect x="5" y="12" width="6" height="2" fill="#777" /><rect x="3" y="14" width="10" height="1.5" fill="#999" /></svg>
      <NavCaret />
      <svg width="16" height="16" viewBox="0 0 16 16" className="ml-[6px]" fill="none"><rect width="16" height="16" fill="#bdbdc8" /><path d="M3.5 0 V16 M7.5 0 V16 M11.5 0 V16 M0 3.5 H16 M0 7.5 H16 M0 11.5 H16" stroke="#55556a" /></svg>
      <NavCaret />
      <svg width="16" height="14" viewBox="0 0 16 14" className="ml-[6px]"><rect x="0.5" y="0.5" width="7" height="6" fill="#8fb4de" stroke="#24406b" /><rect x="8.5" y="0.5" width="7" height="6" fill="#8fb4de" stroke="#24406b" /><rect x="0.5" y="7.5" width="7" height="6" fill="#8fb4de" stroke="#24406b" /><rect x="8.5" y="7.5" width="7" height="6" fill="#8fb4de" stroke="#24406b" /></svg>
      <NavCaret />
    </div>
  )
}

function Viewport() {
  return (
    <div className="relative h-[818px] bg-[#f8f8f8] overflow-hidden">
      <svg width="1920" height="818" viewBox="0 172 1920 818" className="absolute left-0 top-0">
        <GridLines />
        <Model />
      </svg>
      <Browser />
      <ViewCube />
      <div className="absolute left-[4px] bottom-[5px] w-[299px] h-[25px] bg-[#f1f1f1] border border-[#cfcfcf] flex items-center pl-[24px] pr-[10px] text-[10px] text-[#5a6070]">
        <span>COMMENTS</span>
        <FaPlusCircle size={9} className="ml-auto text-[#222]" />
      </div>
      <NavBar />
      <div className="absolute right-[13px] bottom-[9px] w-[16px] h-[16px] rounded-full rounded-br-[2px] bg-black flex items-center justify-center">
        <svg width="10" height="6" viewBox="0 0 10 6" fill="none" stroke="#ccc"><path d="M0 5 L5 1 L5 4 L10 0 M2 6 L7 2" /></svg>
      </div>
    </div>
  )
}

const TIMELINE = ['sk', 'cv', 'sk', 'ex', 'ex', 'ex', 'ex', 'fi', 'fi', 'sk', 'ex', 'ex', 'mv', 'ex', 'sk']

function TimelineIcon({ kind }) {
  if (kind === 'sk') return <SketchIcon size={16} pencil />
  if (kind === 'cv') return <CanvasIcon size={16} />
  if (kind === 'ex') return <ExtrudeIcon size={16} />
  if (kind === 'fi') return <FilletIcon size={16} />
  return <MoveIcon size={16} color="#888" />
}

function Timeline() {
  return (
    <div className="relative h-[50px] bg-[#f1f1f1] border-t border-t-[#d4d4d4] flex items-start">
      <div className="flex items-center gap-[12px] pl-[11px] pt-[17px] text-[#5a5a5a]">
        <svg width="12" height="14" viewBox="0 0 12 14" fill="currentColor"><path d="M0 0 H2.5 V14 H0 Z M12 0 V14 L3 7 Z" /></svg>
        <svg width="13" height="14" viewBox="0 0 13 14" fill="currentColor"><path d="M9 1 V13 L0 7 Z M10.5 4 H13 V10 H10.5 Z" /></svg>
        <svg width="12" height="16" viewBox="0 0 12 16" fill="currentColor"><path d="M0 0 L12 8 L0 16 Z" /></svg>
        <svg width="13" height="14" viewBox="0 0 13 14" fill="currentColor"><path d="M4 1 V13 L13 7 Z M0 4 H2.5 V10 H0 Z" /></svg>
        <svg width="12" height="14" viewBox="0 0 12 14" fill="currentColor"><path d="M12 0 H9.5 V14 H12 Z M0 0 V14 L9 7 Z" /></svg>
      </div>
      <div className="relative ml-[25px] mt-[15px]">
        <div className="flex gap-[8px]">
          {TIMELINE.map((kind, i) => (
            <span key={i} className={i > 10 ? 'opacity-25' : ''}><TimelineIcon kind={kind} /></span>
          ))}
        </div>
        <svg width="352" height="7" viewBox="0 0 352 7" className="mt-[3px] block">
          <path d="M8 6 H344" stroke="#c8c8c8" strokeWidth="2" />
          {TIMELINE.map((_, i) => <path key={i} d={`M${8 + i * 24} 0 V6`} stroke="#c8c8c8" strokeWidth="1.4" />)}
        </svg>
        <svg width="12" height="33" viewBox="0 0 12 33" className="absolute left-[254px] -top-[6px]">
          <path d="M0 0 H12 L7 9 V33 H5 V9 Z" fill="#555" />
        </svg>
      </div>
      <FaCog size={16} className="absolute right-[14px] top-[16px] text-[#7c7c7c]" />
    </div>
  )
}

function Taskbar() {
  return (
    <div className="h-[40px] bg-[#22323b] flex items-stretch text-white">
      <div className="w-[48px] flex items-center justify-center">
        <svg width="16" height="16" viewBox="0 0 16 16" fill="#fff"><path d="M0 2.3 L6.8 1.3 V7.6 H0 Z M7.6 1.2 L16 0 V7.6 H7.6 Z M0 8.4 H6.8 V14.7 L0 13.7 Z M7.6 8.4 H16 V16 L7.6 14.8 Z" /></svg>
      </div>
      <div className="w-[48px] flex items-center justify-center">
        <svg width="22" height="22" viewBox="0 0 22 22" fill="none" stroke="#fff" strokeWidth="2"><circle cx="13" cy="9" r="7.5" /><path d="M7.5 14.5 L1 21" /></svg>
      </div>
      <div className="w-[48px] flex items-center justify-center">
        <svg width="16" height="16" viewBox="0 0 16 16" fill="none" stroke="#fff"><path d="M1 0 H11 M1 15 H11" /><rect x="1.5" y="4.5" width="9" height="6" /><path d="M14 1 V3 M14 5 V10 M14 12 V15" strokeWidth="1.6" /></svg>
      </div>
      <div className="ml-[3px] w-[48px] bg-[#a3652f] border-b-2 border-b-[#f97c00] flex items-center justify-center">
        <svg width="14" height="18" viewBox="0 0 14 18"><path d="M2 2 L13 0 V11 L6 13 L1 17 Z" fill="#1f9c3e" /><circle cx="7" cy="7" r="2" fill="#a3652f" /></svg>
      </div>
      <div className="w-[50px] flex flex-col items-center">
        <div className="flex-1 flex items-center justify-center">
          <svg width="24" height="24" viewBox="0 0 24 24">
            <path d="M12 12 L22.4 6 A12 12 0 0 0 1.6 6 Z" fill="#e33b2e" />
            <path d="M12 12 L1.6 6 A12 12 0 0 0 12 24 Z" fill="#2aa84a" />
            <path d="M12 12 L12 24 A12 12 0 0 0 22.4 6 Z" fill="#fbc02d" />
            <circle cx="12" cy="12" r="5.6" fill="#fff" />
            <circle cx="12" cy="12" r="4.4" fill="#3b82e6" />
          </svg>
        </div>
        <span className="w-[40px] h-[2px] bg-[#6db3e8]" />
      </div>
      <div className="w-[48px] bg-[#48555d] flex flex-col items-center border-r-[3px] border-r-[#37454d]">
        <div className="flex-1 flex items-center justify-center">
          <svg width="22" height="26" viewBox="0 0 22 26">
            <path d="M2 1 H20 V19 H2 Q0 10 2 1 Z" fill="#f47b20" />
            <rect x="2" y="18" width="18" height="7" fill="#8a3b0c" />
            <path d="M8 4 H15 V7 H11 V9 H14 V12 H11 V16 H8 Z" fill="#fff" />
            <text x="11" y="24" fontSize="5" fontWeight="700" textAnchor="middle" fill="#f5d9b5" fontFamily="'Liberation Sans', sans-serif">FUS</text>
          </svg>
        </div>
        <span className="w-full h-[2px] bg-[#6db3e8]" />
      </div>
      <div className="ml-auto flex items-stretch">
        <div className="w-[24px] flex items-center justify-center">
          <svg width="12" height="7" viewBox="0 0 12 7" fill="none" stroke="#fff"><path d="M0.5 6.5 L6 1 L11.5 6.5" /></svg>
        </div>
        <div className="w-[23px] flex items-center justify-center">
          <svg width="16" height="14" viewBox="0 0 16 14" fill="none" stroke="#fff"><rect x="2.5" y="1.5" width="13" height="8" /><rect x="0.5" y="0.5" width="4" height="4" fill="#22323b" /><path d="M8 10 V13 M4 13.5 H12" /></svg>
        </div>
        <div className="w-[24px] flex items-center justify-center">
          <svg width="15" height="12" viewBox="0 0 15 12" fill="none" stroke="#ddd"><path d="M0.5 4 H3 L7 1 V11 L3 8 H0.5 Z" /><path d="M10 4 L14 8 M14 4 L10 8" /></svg>
        </div>
        <div className="w-[72px] flex flex-col items-center justify-center text-[11.5px] leading-[17px] font-['Noto_Sans',sans-serif]">
          <span>11:29 am</span>
          <span>16/08/2024</span>
        </div>
        <div className="w-[44px] flex items-center justify-center">
          <span className="relative inline-block w-[16px] h-[14px] bg-white -translate-x-[2px] -translate-y-[2px]">
            <span className="absolute -right-[7px] -bottom-[9px] w-[16px] h-[16px] rounded-full bg-[#3a474f] border border-[#aaa] text-[11px] font-bold leading-[14px] text-center">4</span>
          </span>
        </div>
        <div className="w-[8px] flex items-stretch pl-[3px]"><span className="w-px bg-[#5c6a72]" /></div>
      </div>
    </div>
  )
}

export default function App() {
  return (
    <div className="w-[1920px] h-[1080px] overflow-hidden flex flex-col bg-[#f8f8f8] font-['Liberation_Sans',Arial,sans-serif]">
      <TitleBar />
      <TabBar />
      <Ribbon />
      <div className="h-[3px] bg-[#f8f8f8]" />
      <Banner />
      <Viewport />
      <Timeline />
      <Taskbar />
    </div>
  )
}
